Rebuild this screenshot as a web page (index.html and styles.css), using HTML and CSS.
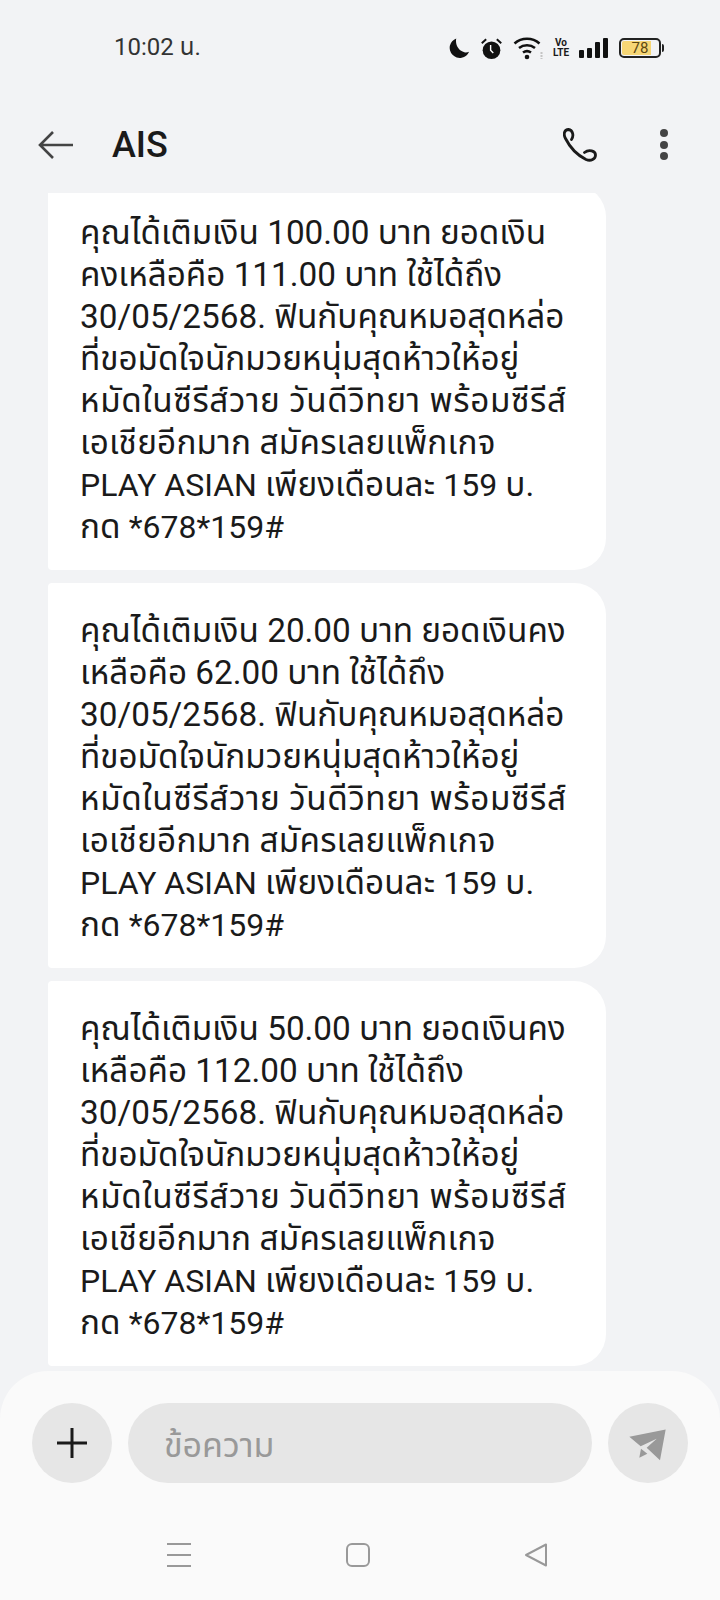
FILE: index.html
```html
<!DOCTYPE html>
<html lang="th">
<head>
    <meta charset="UTF-8">
    <meta name="viewport" content="width=device-width, initial-scale=1.0">
    <title>AIS</title>
    <link rel="stylesheet" href="styles.css">
</head>
<body>
    <div class="screen">
        <div class="status">
            <span class="clock">10:02 น.</span>
            <div class="status-icons">
                <svg width="22" height="22" viewBox="0 0 24 24"><path d="M9 1.500a11 11 0 1 0 14 14.500c-1.600.8-3.400 1-5.200.6C12 15.200 7.500 9 9 1.500z" fill="#111"/></svg>
                <svg width="23" height="23" viewBox="0 0 26 26"><circle cx="13" cy="15" r="10" fill="#111"/><path d="M12 9v6l3 3" stroke="#fff" stroke-width="1.600" fill="none"/><path d="M2 7 7 2.500M24 7 19 2.500" stroke="#111" stroke-width="2.200"/></svg>
                <svg width="30" height="24" viewBox="0 0 30 24"><path d="M1.500 7.500a19 19 0 0 1 25 0M6 12a13 13 0 0 1 16 0M10 16.500a7 7 0 0 1 8 0" stroke="#111" stroke-width="2.600" fill="none"/><circle cx="14" cy="21" r="2.300" fill="#111"/><path d="M28.500 16v7" stroke="#c4c4c4" stroke-width="2" stroke-dasharray="2 1"/></svg>
                <span class="volte">Vo<br>LTE</span>
                <div class="signal"><i class="b1"></i><i class="b2"></i><i class="b3"></i><i class="b4"></i></div>
                <div class="battery-wrap">
                    <div class="battery"><span class="battery-level">78</span></div>
                    <i class="battery-nub"></i>
                </div>
            </div>
        </div>

        <div class="topbar">
            <svg class="back" width="38" height="30" viewBox="0 0 38 30"><path d="M36 15H3M16 2 3 15l13 13" stroke="#444" stroke-width="2.600" fill="none"/></svg>
            <h1>AIS</h1>
            <svg class="call" width="34" height="34" viewBox="0 0 34 34"><path d="M8.500 11.500C11 8 10 2 5.500 1.500 1.500 1.500 0 6 2.500 10.500 7 19.500 14 27 23 31.500 28 33.500 32.500 31 32.500 27 32.500 23 26 21 21.500 24.500" stroke="#1a1a1a" stroke-width="2.800" fill="none" stroke-linecap="round"/></svg>
            <div class="more"><i></i><i></i><i></i></div>
        </div>

        <div class="messages">
            <div class="bubble bubble-cut">คุณได้เติมเงิน 100.00 บาท ยอดเงิน<br>คงเหลือคือ 111.00 บาท ใช้ได้ถึง<br>30/05/2568. ฟินกับคุณหมอสุดหล่อ<br>ที่ขอมัดใจนักมวยหนุ่มสุดห้าวให้อยู่<br><span class="wide">หมัดในซีรีส์วาย วันดีวิทยา พร้อมซีรีส์</span><br><span class="wide-sm">เอเชียอีกมาก สมัครเลยแพ็กเกจ</span><br><span class="lat">PLAY ASIAN</span> เพียงเดือนละ <span class="lat">159</span> บ.<br>กด <span class="lat">*678*159#</span></div>
            <div class="bubble">คุณได้เติมเงิน 20.00 บาท ยอดเงินคง<br>เหลือคือ 62.00 บาท ใช้ได้ถึง<br>30/05/2568. ฟินกับคุณหมอสุดหล่อ<br>ที่ขอมัดใจนักมวยหนุ่มสุดห้าวให้อยู่<br><span class="wide">หมัดในซีรีส์วาย วันดีวิทยา พร้อมซีรีส์</span><br><span class="wide-sm">เอเชียอีกมาก สมัครเลยแพ็กเกจ</span><br><span class="lat">PLAY ASIAN</span> เพียงเดือนละ <span class="lat">159</span> บ.<br>กด <span class="lat">*678*159#</span></div>
            <div class="bubble">คุณได้เติมเงิน 50.00 บาท ยอดเงินคง<br>เหลือคือ 112.00 บาท ใช้ได้ถึง<br>30/05/2568. ฟินกับคุณหมอสุดหล่อ<br>ที่ขอมัดใจนักมวยหนุ่มสุดห้าวให้อยู่<br><span class="wide">หมัดในซีรีส์วาย วันดีวิทยา พร้อมซีรีส์</span><br><span class="wide-sm">เอเชียอีกมาก สมัครเลยแพ็กเกจ</span><br><span class="lat">PLAY ASIAN</span> เพียงเดือนละ <span class="lat">159</span> บ.<br>กด <span class="lat">*678*159#</span></div>
        </div>

        <div class="composer">
            <div class="input-row">
                <div class="round-btn">
                    <svg width="30" height="30" viewBox="0 0 30 30"><path d="M15 0v30M0 15h30" stroke="#1a1a1a" stroke-width="3"/></svg>
                </div>
                <div class="input">ข้อความ</div>
                <div class="round-btn">
                    <svg width="40" height="35" viewBox="54 65 120 104"><path d="M58 97 167 75 150 167 110 130 140 103 92 125z" fill="#999"/><path d="M93 133 88 160 112 148z" fill="#999"/></svg>
                </div>
            </div>
            <div class="navbar">
                <svg width="24" height="24" viewBox="0 0 24 24"><path d="M0 1h24M0 12h24M0 23h24" stroke="#999" stroke-width="2"/></svg>
                <svg width="24" height="24" viewBox="0 0 24 24"><rect x="1" y="1" width="22" height="22" rx="5" stroke="#999" stroke-width="2" fill="none"/></svg>
                <svg width="24" height="24" viewBox="0 0 24 24"><path d="M22 1.500v21L2 12z" stroke="#999" stroke-width="2" stroke-linejoin="round" fill="none"/></svg>
            </div>
        </div>
    </div>
</body>
</html>
```

FILE: styles.css
```css
* {
    box-sizing: border-box;
}
body {
    margin: 0;
    background: #f2f3f5;
    font-family: Roboto, "Noto Sans", "Noto Sans Thai", "DejaVu Sans", sans-serif;
    color: #1a1a1a;
}
.screen {
    width: 720px;
    height: 1600px;
    display: flex;
    flex-direction: column;
    overflow: hidden;
}
.status {
    height: 96px;
    padding: 0 56px 0 114px;
    display: flex;
    align-items: center;
    justify-content: space-between;
}
.clock {
    font-size: 24px;
    color: #333;
}
.status-icons {
    display: flex;
    align-items: center;
    gap: 10px;
}
.volte {
    width: 16px;
    font-size: 10px;
    line-height: 10px;
    font-weight: 700;
    text-align: center;
}
.signal {
    display: flex;
    align-items: flex-end;
    gap: 3px;
    width: 30px;
    height: 20px;
}
.signal i {
    width: 5px;
    background: #111;
    border-radius: 1px;
}
.b1 { height: 8px; }
.b2 { height: 10px; }
.b3 { height: 16px; }
.b4 { height: 20px; }
.battery-wrap {
    display: flex;
    align-items: center;
    gap: 1px;
}
.battery {
    width: 42px;
    height: 20px;
    border: 2px solid #222;
    border-radius: 5px;
    padding: 1px;
    font-size: 15px;
    line-height: 14px;
    color: #5c4712;
    text-align: center;
}
.battery-level {
    display: block;
    background: linear-gradient(90deg, #f6d675 80%, #f2f3f5 80%);
    border-radius: 2px;
    width: 36px;
    height: 14px;
}
.battery-nub {
    width: 2px;
    height: 8px;
    background: #222;
    border-radius: 0 2px 2px 0;
}
.topbar {
    height: 97px;
    padding: 0 52px 0 37px;
    display: flex;
    align-items: center;
}
.topbar h1 {
    margin: 0 0 0 37px;
    font-size: 36px;
    font-weight: 500;
    flex: 1;
}
.call {
    margin-right: 63px;
}
.more {
    display: flex;
    flex-direction: column;
    gap: 3.500px;
}
.more i {
    width: 8px;
    height: 8px;
    border-radius: 50%;
    background: #444;
}
.messages {
    flex: 1;
    padding: 0 0 0 48px;
    display: flex;
    flex-direction: column;
    gap: 13px;
    overflow: hidden;
}
.bubble {
    width: 558px;
    padding: 27px 20px 22px 32px;
    background: #fff;
    border-radius: 4px 32px 32px 4px;
    font-size: 33.300px;
    line-height: 42px;
    white-space: nowrap;
    flex-shrink: 0;
}
.bubble-cut {
    margin-top: -8px;
}
.lat {
    font-size: 32px;
}
.wide {
    letter-spacing: 0.600px;
}
.wide-sm {
    letter-spacing: 0.200px;
}
.composer {
    height: 229px;
    background: #fafafa;
    border-radius: 48px 48px 0 0;
    padding: 32px 32px 0;
}
.input-row {
    display: flex;
    align-items: center;
    gap: 16px;
}
.round-btn {
    width: 80px;
    height: 80px;
    border-radius: 50%;
    background: #e6e6e6;
    display: flex;
    align-items: center;
    justify-content: center;
}
.input {
    flex: 1;
    height: 80px;
    border-radius: 40px;
    background: #e6e6e6;
    padding: 0 36px;
    font-size: 34px;
    line-height: 84px;
    color: #999;
}
.navbar {
    margin-top: 60px;
    padding: 0 140px 0 135px;
    display: flex;
    justify-content: space-between;
}
```
